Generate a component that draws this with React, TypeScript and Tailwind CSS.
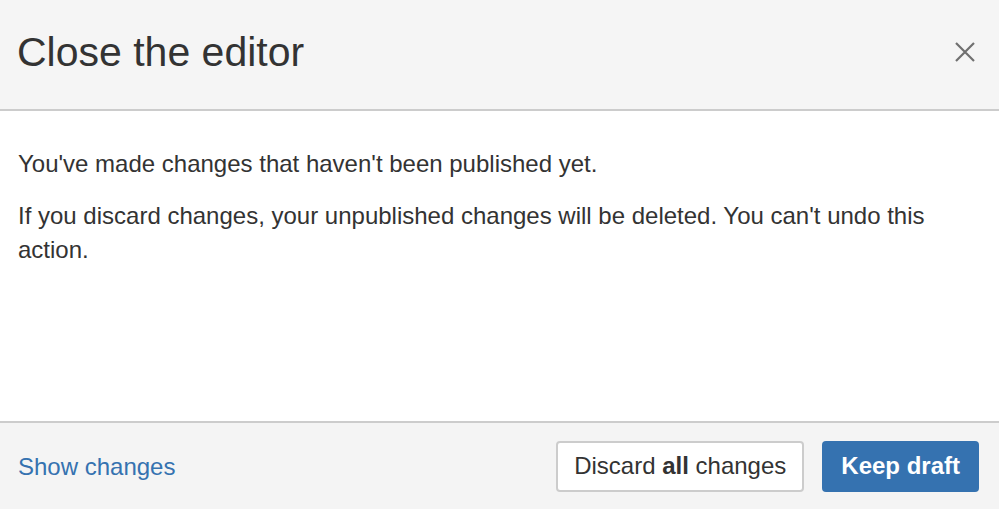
export default function App() {
  return (
    <div className="flex h-[509px] w-[999px] flex-col bg-white font-['Liberation_Sans',Arial,sans-serif] text-[#333]">
      {/* Header */}
      <div className="flex h-[111px] shrink-0 items-center justify-between border-b-2 border-[#cccccc] bg-[#f5f5f5] pl-[17px] pr-[24px]">
        <h1 className="pb-[4px] text-[41px] leading-none font-normal">Close the editor</h1>
        <button className="mb-[6px] text-[#707070]">
          <svg width="20" height="20" viewBox="0 0 20 20" fill="none" stroke="currentColor" strokeWidth="2.2">
            <path d="M1 1L19 19M19 1L1 19" />
          </svg>
        </button>
      </div>

      {/* Body */}
      <div className="flex-1 px-[18px] pt-[36px] text-[24px] leading-[34px]">
        <p className="mb-[18px]">You've made changes that haven't been published yet.</p>
        <p>If you discard changes, your unpublished changes will be deleted. You can't undo this action.</p>
      </div>

      {/* Footer */}
      <div className="flex h-[88px] shrink-0 items-center justify-between border-t-2 border-[#cccccc] bg-[#f4f4f4] pl-[18px] pr-[20px]">
        <a className="pt-[2px] text-[24px] text-[#3572b0]">Show changes</a>
        <div className="flex items-center gap-[18px]">
          <button className="h-[51px] rounded-[4px] border-2 border-[#cccccc] bg-white px-[16px] text-[24px] text-[#333]">
            Discard <span className="font-bold">all</span> changes
          </button>
          <button className="h-[51px] rounded-[4px] bg-[#3572b0] px-[19px] text-[24px] font-bold text-white">
            Keep draft
          </button>
        </div>
      </div>
    </div>
  )
}
